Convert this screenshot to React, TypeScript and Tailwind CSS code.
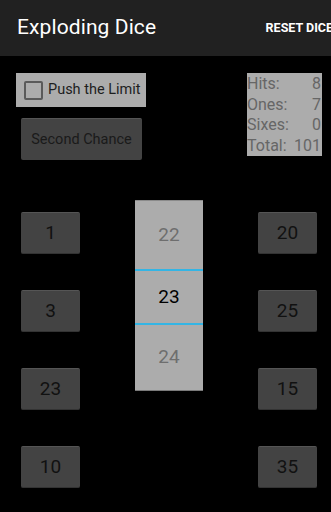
import React from "react";

const font = { fontFamily: "Roboto, 'Noto Sans', sans-serif" };

const DieButton = ({ value }: { value: number }) => (
    <div className="h-[42px] w-[59px] flex items-center justify-center rounded-[2px] bg-[#434343] border-t border-[#555] border-b border-b-[#333] text-[19px] text-[#111]">
        {value}
    </div>
);

const StatRow = ({ label, value }: { label: string; value: number }) => (
    <div className="flex justify-between h-[20.7px] leading-[20.7px]">
        <span>{label}</span>
        <span>{value}</span>
    </div>
);

const App = () => {
    const left = [1, 3, 23, 10];
    const right = [20, 25, 15, 35];

    return (
        <div className="w-[331px] h-[512px] bg-black overflow-hidden flex flex-col" style={font}>
            <div className="flex-none h-[56px] bg-[#212121] flex items-center justify-between pl-[17px]">
                <h1 className="text-[21px] text-white tracking-[0.1px]">Exploding Dice</h1>
                <span className="text-[12.5px] font-bold text-white whitespace-nowrap mr-[-2px]">RESET DICE</span>
            </div>

            <div className="flex justify-between pt-[17px] pl-[16px] pr-[9px]">
                <div className="flex flex-col">
                    <div className="h-[34px] w-[130px] bg-[#acacac] flex items-center pl-[8px] gap-[5px]">
                        <div className="h-[19px] w-[19px] rounded-[2px] border-2 border-[#5a5a5a]" />
                        <span className="text-[14.5px] text-[#1e1e1e]">Push the Limit</span>
                    </div>
                    <div className="mt-[11px] ml-[5px] h-[42px] w-[121px] rounded-[2px] bg-[#434343] border-t border-[#555] flex items-center justify-center text-[14.5px] text-[#1a1a1a]">
                        Second Chance
                    </div>
                </div>
                <div className="h-[83px] w-[75px] bg-[#acacac] text-[#666] text-[16px] pr-[1px] pt-[1px]">
                    <StatRow label="Hits:" value={8} />
                    <StatRow label="Ones:" value={7} />
                    <StatRow label="Sixes:" value={0} />
                    <StatRow label="Total:" value={101} />
                </div>
            </div>

            <div className="flex mt-[40px] pl-[21px]">
                <div className="flex flex-col gap-[36px] pt-[12px]">
                    {left.map((v, i) => (
                        <DieButton key={i} value={v} />
                    ))}
                </div>
                <div className="ml-[55px] w-[68px] h-[191px] bg-[#acacac] border-t border-[#8a8a8a] border-b border-b-[#7a7a7a] flex flex-col text-[19px]">
                    <div className="h-[68px] flex items-center justify-center text-[#6e6e6e]">22</div>
                    <div className="h-[2px] bg-[#33b5e5]" />
                    <div className="h-[52px] flex items-center justify-center text-black">23</div>
                    <div className="h-[2px] bg-[#33b5e5]" />
                    <div className="flex-1 flex items-center justify-center text-[#6e6e6e]">24</div>
                </div>
                <div className="ml-[55px] flex flex-col gap-[36px] pt-[12px]">
                    {right.map((v, i) => (
                        <DieButton key={i} value={v} />
                    ))}
                </div>
            </div>
        </div>
    );
};

export default App;
